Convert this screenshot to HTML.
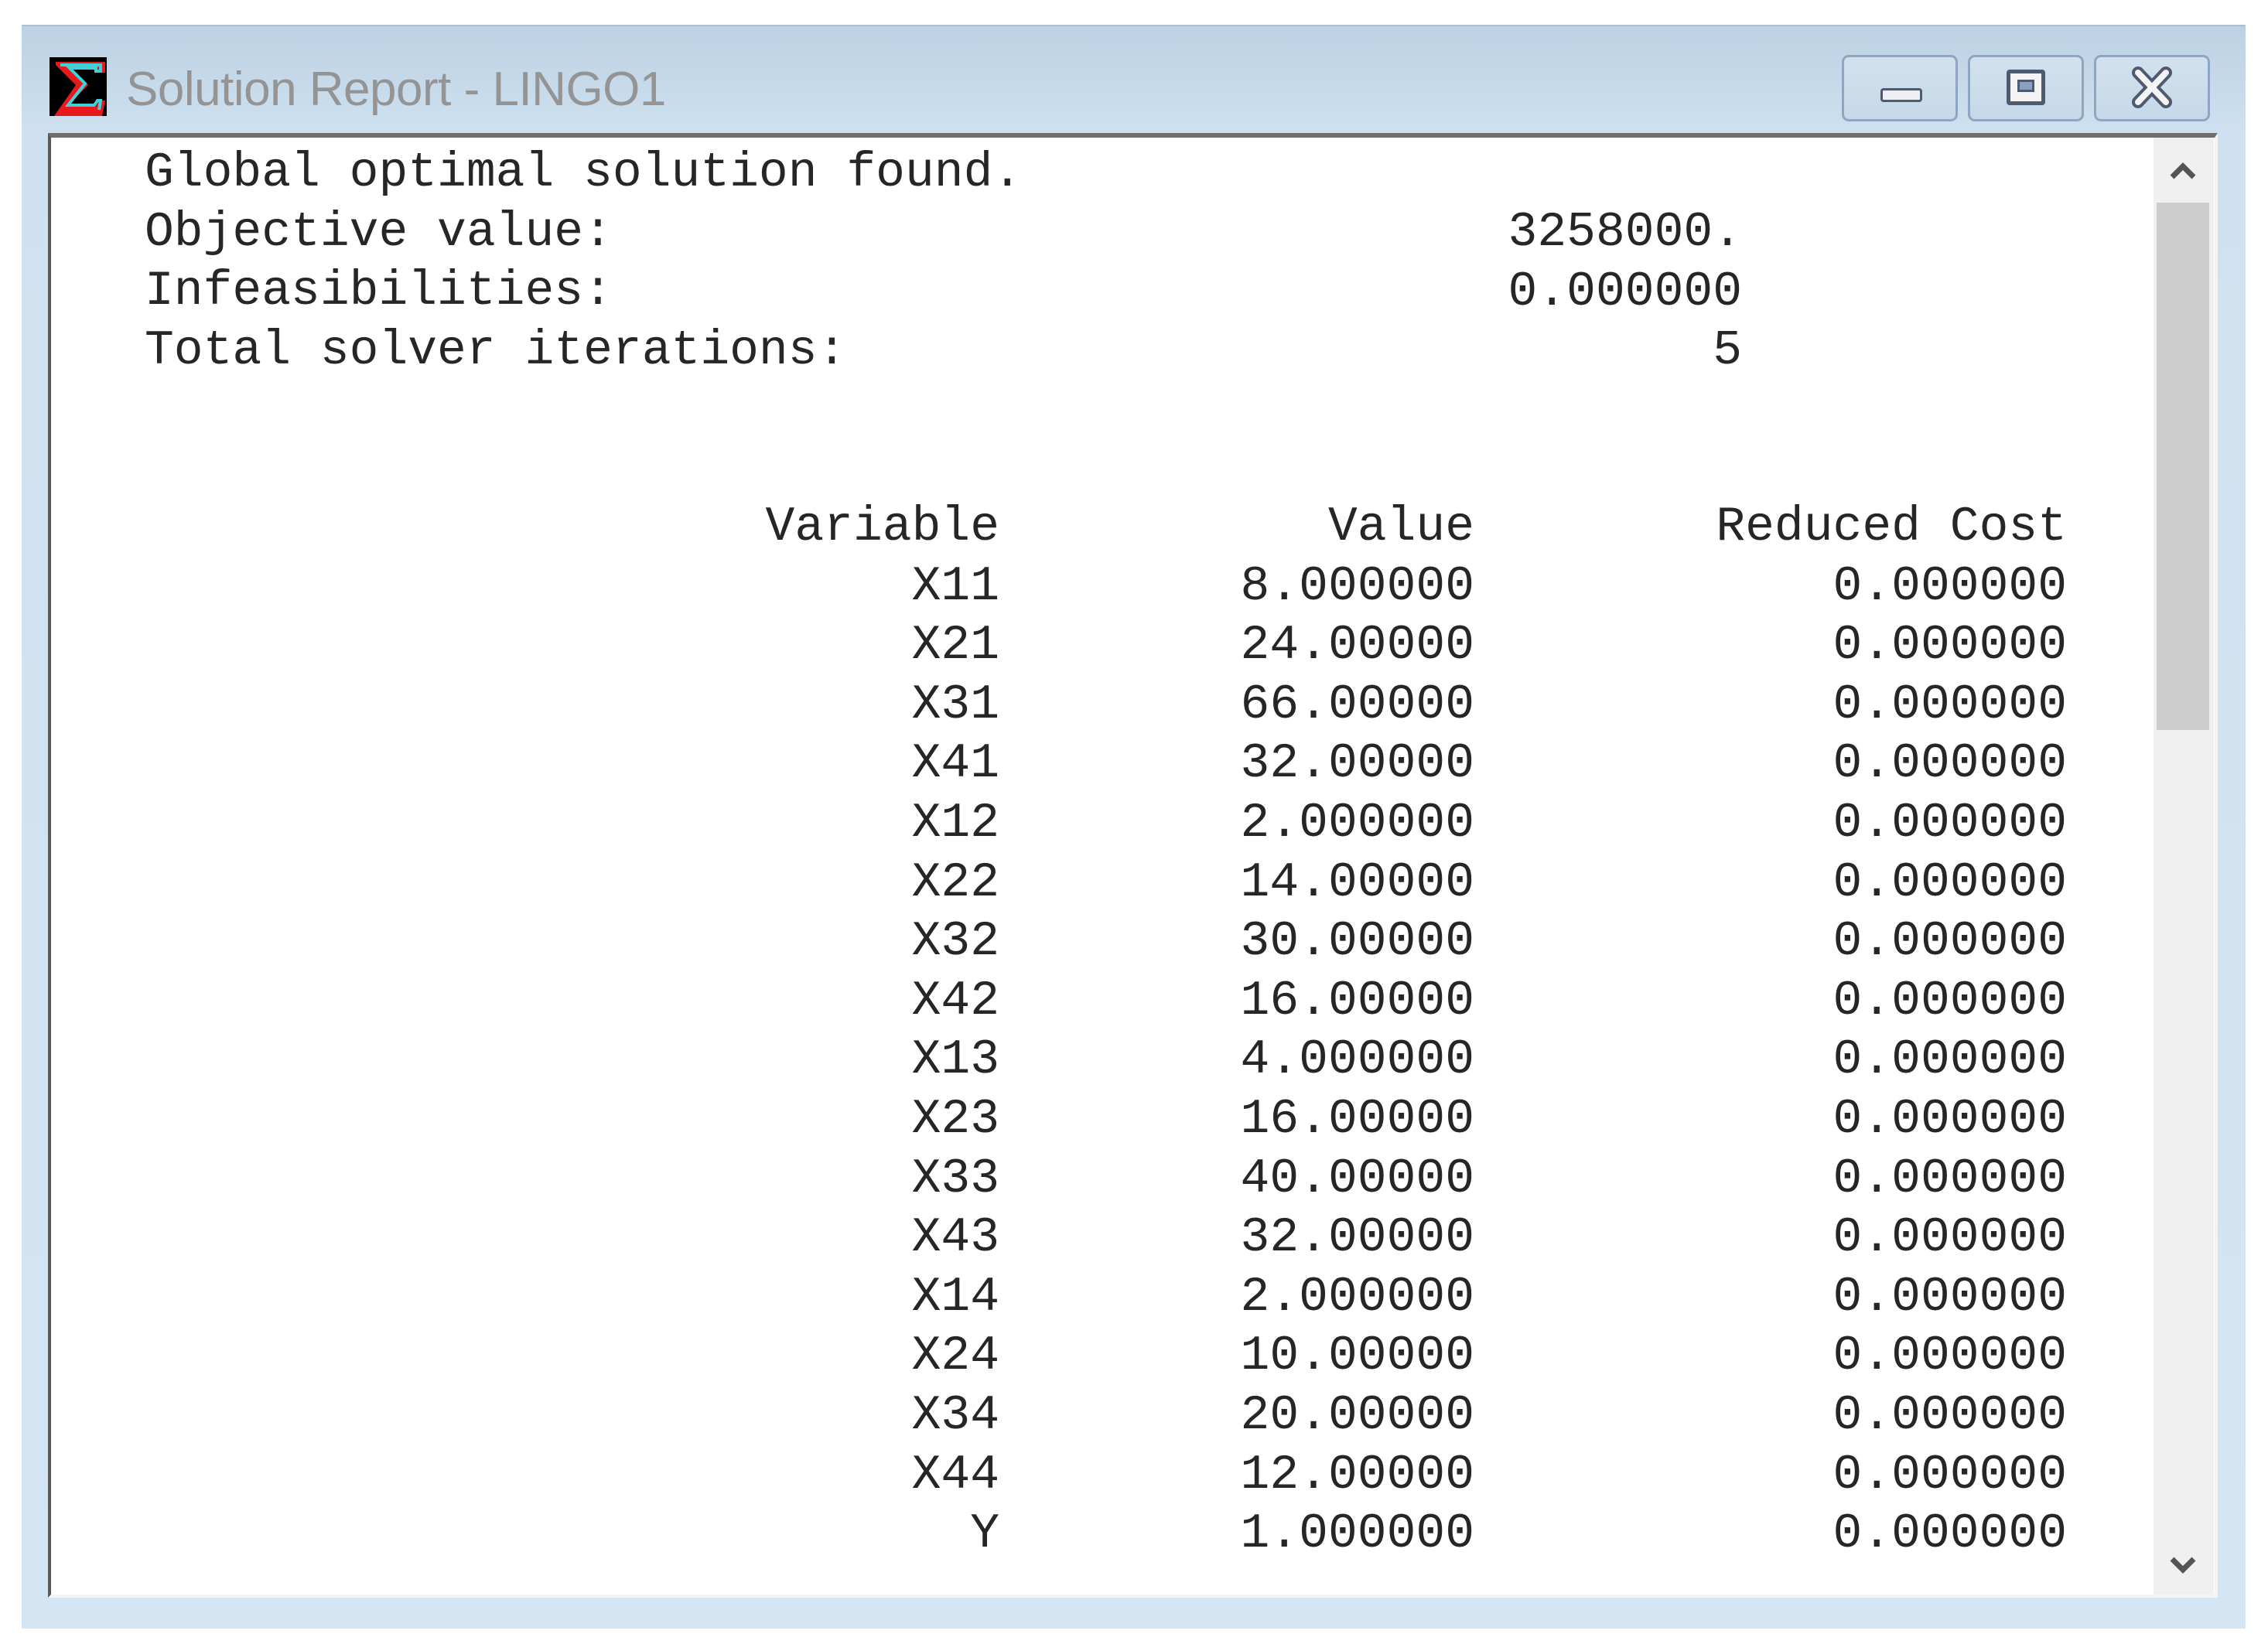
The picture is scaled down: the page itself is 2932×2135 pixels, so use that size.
<!DOCTYPE html>
<html><head><meta charset="utf-8"><style>
body{margin:0;width:2932px;height:2135px;background:#fff;position:relative;overflow:hidden}
.win{position:absolute;left:28px;top:32px;width:2875px;height:2072px;background:linear-gradient(#bcd1e3 0,#cfe1f0 140px,#d4e5f3 100%);border-top:2px solid #a9bfd3}
.title{position:absolute;left:163px;top:80px;font:62px "Liberation Sans",sans-serif;color:#949494;line-height:72px;letter-spacing:-0.5px}
.btn{position:absolute;top:71px;width:144px;height:80px;border:3px solid #8fa6c2;border-radius:9px;background:linear-gradient(#d2e1ee,#c6d8e8)}
.content{position:absolute;left:62px;top:172px;width:2805px;height:1894px;background:#fff;border-top:6px solid #6e6e6e;border-left:4px solid #5a5a5a;border-right:4px solid #f4f4f4;border-bottom:4px solid #f4f4f4;box-sizing:border-box}
.sb{position:absolute;left:2784px;top:178px;width:78px;height:1884px;background:#f0f0f0}
.thumb{position:absolute;left:2788px;top:262px;width:68px;height:682px;background:#cdcdcd}
.t{position:absolute;font:63px "Liberation Mono","Courier New",monospace;color:#262626;line-height:76.6px;white-space:pre}
.r{text-align:right}
</style></head><body>
<div class="win"></div>
<svg style="position:absolute;left:64px;top:74px" width="78" height="78" viewBox="0 0 78 78">
<rect x="0" y="0" width="74" height="76" fill="#000"/>
<path d="M8 6h64v14h-8l-2-6H28l22 22-28 28h38l4-8h8l-4 20H6l28-40L8 10z" fill="#e8191d"/>
<path d="M14 10h52v8h-6v-4H26l20 20-22 28h34l4-6h4l-2 12" fill="none" stroke="#3fd1d6" stroke-width="4"/>
</svg>
<div class="title">Solution Report - LINGO1</div>
<div class="btn" style="left:2381px"><div style="position:absolute;left:47px;top:40px;width:48px;height:12px;border:3px solid #4d5a70;border-radius:4px;background:#eef0f3"></div></div>
<div class="btn" style="left:2544px"><div style="position:absolute;left:47px;top:16px;width:40px;height:36px;border:5px solid #4d5a70;border-radius:4px;background:#f3f3f3"><div style="position:absolute;left:9px;top:8px;width:16px;height:10px;border:3px solid #4d5a70;background:#8aa0c0"></div></div></div>
<div class="btn" style="left:2707px"><svg style="position:absolute;left:44px;top:12px" width="56" height="56" viewBox="0 0 56 56"><path d="M10 8L46 46M46 8L10 46" stroke="#4d5a70" stroke-width="16" stroke-linecap="round"/><path d="M10 8L46 46M46 8L10 46" stroke="#f3f3f3" stroke-width="8" stroke-linecap="round"/></svg></div>
<div class="content"></div>
<div class="sb"></div><div class="thumb"></div>
<svg style="position:absolute;left:2802px;top:205px" width="40" height="30"><path d="M6 24L20 10L34 24" fill="none" stroke="#555" stroke-width="7"/></svg>
<svg style="position:absolute;left:2802px;top:2010px" width="40" height="30"><path d="M6 6L20 20L34 6" fill="none" stroke="#555" stroke-width="7"/></svg>

<div class="t" style="left:187px;top:186px">Global optimal solution found.
Objective value:
Infeasibilities:
Total solver iterations:</div>
<div class="t r" style="left:1800px;width:452px;top:263px">3258000.
0.000000
5</div>
<div class="t r" style="left:900px;width:392px;top:644px">Variable
X11
X21
X31
X41
X12
X22
X32
X42
X13
X23
X33
X43
X14
X24
X34
X44
Y</div>
<div class="t r" style="left:1400px;width:506px;top:644px">Value
8.000000
24.00000
66.00000
32.00000
2.000000
14.00000
30.00000
16.00000
4.000000
16.00000
40.00000
32.00000
2.000000
10.00000
20.00000
12.00000
1.000000</div>
<div class="t r" style="left:2100px;width:572px;top:644px">Reduced Cost
0.000000
0.000000
0.000000
0.000000
0.000000
0.000000
0.000000
0.000000
0.000000
0.000000
0.000000
0.000000
0.000000
0.000000
0.000000
0.000000
0.000000</div>
</body></html>
